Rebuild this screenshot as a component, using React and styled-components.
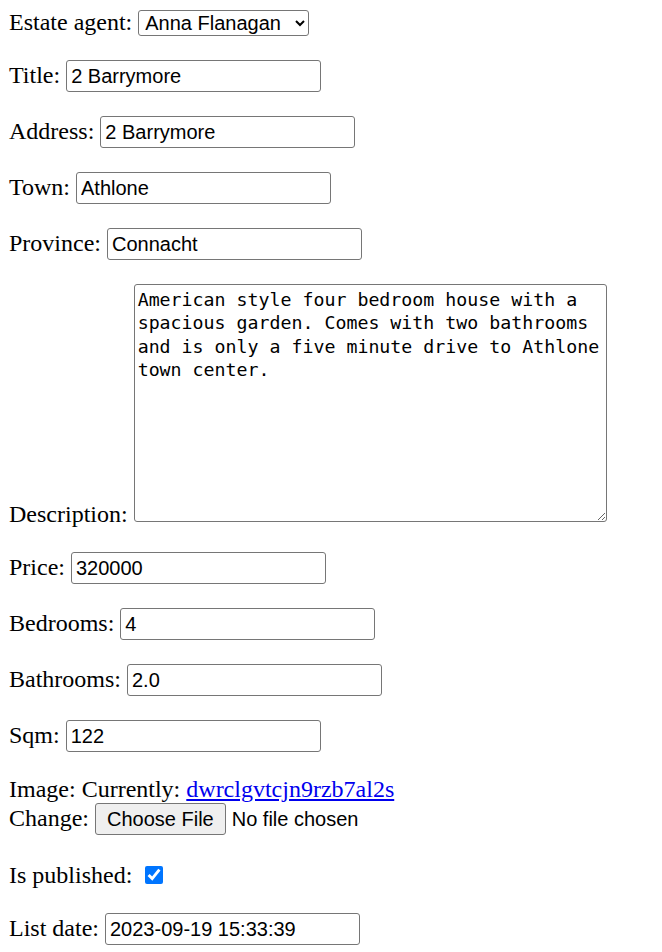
import React from 'react';
import styled, { createGlobalStyle } from 'styled-components';

const GlobalStyle = createGlobalStyle`
  body {
    margin: 0;
    background: #fff;
    color: #000;
    font-family: "Liberation Serif", "Times New Roman", serif;
  }
`;

const Form = styled.form`
  padding: 0 9px;
  font-size: 24px;
`;

const Field = styled.p`
  margin: 0 0 ${(p) => p.$gap || 24}px 0;
  font-size: 24px;
  line-height: normal;
  &:first-child {
    margin-top: 9px;
  }
`;

const Label = styled.label`
  font-size: 24px;
`;

const TextInput = styled.input`
  box-sizing: border-box;
  width: 255px;
  height: 32px;
  margin: 0;
  padding: 1px 4px;
  border: 1px solid #767676;
  border-radius: 3px;
  font-family: "Liberation Sans", Arial, sans-serif;
  font-size: 20px;
  color: #000;
  background: #fff;
`;

const Select = styled.select`
  box-sizing: border-box;
  width: 171px;
  height: 26px;
  margin: 0;
  padding: 0 2px;
  border: 1px solid #767676;
  border-radius: 3px;
  font-family: "Liberation Sans", Arial, sans-serif;
  font-size: 20px;
  color: #000;
  background: #fff;
`;

const TextArea = styled.textarea`
  box-sizing: border-box;
  width: 473px;
  height: 238px;
  margin: 0;
  padding: 3px;
  border: 1px solid #767676;
  border-radius: 3px;
  font-family: "DejaVu Sans Mono", "Liberation Mono", monospace;
  font-size: 18.25px;
  line-height: 23.3px;
  color: #000;
  background: #fff;
  vertical-align: baseline;
`;

const Link = styled.a`
  color: #0000ee;
  text-decoration: underline;
`;

const FileInput = styled.input`
  margin: 0;
  font-family: "Liberation Sans", Arial, sans-serif;
  font-size: 20px;
  color: #000;
  &::file-selector-button {
    box-sizing: border-box;
    height: 32px;
    margin: 0 6px 0 0;
    padding: 0 11px;
    border: 1px solid #767676;
    border-radius: 3px;
    background: #efefef;
    font-family: "Liberation Sans", Arial, sans-serif;
    font-size: 20px;
    color: #000;
  }
`;

const Checkbox = styled.input`
  width: 18px;
  height: 18px;
  margin: 0 0 0 7px;
  accent-color: #0075ff;
  vertical-align: -1px;
`;

const fields = [
  { id: 'title', label: 'Title:', value: '2 Barrymore' },
  { id: 'address', label: 'Address:', value: '2 Barrymore' },
  { id: 'town', label: 'Town:', value: 'Athlone' },
  { id: 'province', label: 'Province:', value: 'Connacht' },
];

const numbers = [
  { id: 'price', label: 'Price:', value: '320000' },
  { id: 'bedrooms', label: 'Bedrooms:', value: '4' },
  { id: 'bathrooms', label: 'Bathrooms:', value: '2.0' },
  { id: 'sqm', label: 'Sqm:', value: '122' },
];

const description =
  'American style four bedroom house with a spacious garden. Comes with two bathrooms and is only a five minute drive to Athlone town center.';

export default function App() {
  return (
    <>
      <GlobalStyle />
      <Form onSubmit={(e) => e.preventDefault()}>
        <Field>
          <Label htmlFor="id_realtor">Estate agent:</Label>{' '}
          <Select id="id_realtor" defaultValue="anna">
            <option value="anna">Anna Flanagan</option>
          </Select>
        </Field>
        {fields.map((f) => (
          <Field key={f.id}>
            <Label htmlFor={'id_' + f.id}>{f.label}</Label>{' '}
            <TextInput id={'id_' + f.id} type="text" defaultValue={f.value} />
          </Field>
        ))}
        <Field>
          <Label htmlFor="id_description">Description:</Label>{' '}
          <TextArea id="id_description" defaultValue={description} />
        </Field>
        {numbers.map((f) => (
          <Field key={f.id}>
            <Label htmlFor={'id_' + f.id}>{f.label}</Label>{' '}
            <TextInput id={'id_' + f.id} type="text" defaultValue={f.value} />
          </Field>
        ))}
        <Field $gap={27}>
          <Label htmlFor="id_photo_main">Image:</Label> Currently:{' '}
          <Link href="#">dwrclgvtcjn9rzb7al2s</Link>
          <br />
          Change: <FileInput id="id_photo_main" type="file" />
        </Field>
        <Field>
          <Label htmlFor="id_is_published">Is published:</Label>{' '}
          <Checkbox id="id_is_published" type="checkbox" defaultChecked />
        </Field>
        <Field>
          <Label htmlFor="id_list_date">List date:</Label>{' '}
          <TextInput id="id_list_date" type="text" defaultValue="2023-09-19 15:33:39" />
        </Field>
      </Form>
    </>
  );
}
